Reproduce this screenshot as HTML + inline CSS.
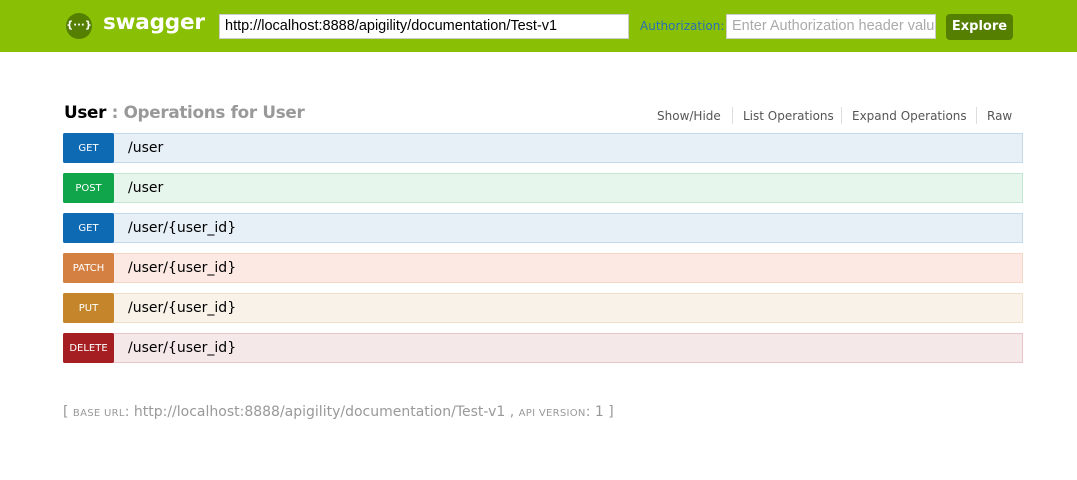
<!DOCTYPE html>
<html><head><meta charset="utf-8"><style>
*{box-sizing:border-box;margin:0;padding:0}
body{width:1077px;height:480px;background:#fff;font-family:"DejaVu Sans","Liberation Sans",sans-serif;position:relative;overflow:hidden}
#hdr{position:absolute;left:0;top:0;width:1077px;height:52px;background:#89bf04}
.logo{position:absolute;left:66px;top:13px;width:26px;height:26px;border-radius:50%;background:#547f00;color:#fff;font-size:10px;font-weight:bold;text-align:center;line-height:25px}
.brand{position:absolute;left:103px;top:10px;color:#fff;font-weight:bold;font-size:21.5px;letter-spacing:-0.2px}
.inp{position:absolute;top:14px;height:25px;background:#fff;border:1px solid #ccc;font-family:"Liberation Sans",sans-serif;font-size:14.5px;line-height:23px;padding-left:5px;white-space:nowrap;overflow:hidden}
.auth{position:absolute;left:640px;top:19px;color:#2a6eb8;font-size:12px}
.btn{position:absolute;left:946px;top:14px;width:67px;height:26px;background:#547f00;color:#fff;font-weight:bold;font-size:13px;text-align:center;line-height:26px;border-radius:4px}
.title{position:absolute;left:64px;top:102px;font-size:16.8px;font-weight:bold;color:#000;letter-spacing:-0.3px}
.title span{color:#999}
.links{position:absolute;top:109px;font-size:12px;color:#555}
.sep{position:absolute;top:107px;width:1px;height:17px;background:#ddd}
.row{position:absolute;left:63px;width:960px;height:30px;border:1px solid}
.badge{position:absolute;left:-1px;top:-1px;width:51px;height:30px;border-radius:2px;color:#fff;font-size:10px;text-align:center;line-height:31px}
.path{position:absolute;left:64px;top:1px;line-height:27px;font-size:14px;color:#000}
.foot{position:absolute;left:63px;top:404px;font-size:14px;color:#999;white-space:nowrap}
.sc{font-size:10px;letter-spacing:.3px}
</style></head><body>
<div id="hdr">
<div class="logo">{···}</div>
<div class="brand">swagger</div>
<div class="inp" style="left:219px;width:410px;color:#000">http://localhost:8888/apigility/documentation/Test-v1</div>
<div class="auth">Authorization:</div>
<div class="inp" style="left:726px;width:210px;color:#aaa">Enter Authorization header value</div>
<div class="btn">Explore</div>
</div>
<div class="title">User <span>: Operations for User</span></div>
<div class="links" style="left:657px">Show/Hide</div>
<div class="sep" style="left:732px"></div>
<div class="links" style="left:743px">List Operations</div>
<div class="sep" style="left:841px"></div>
<div class="links" style="left:852px">Expand Operations</div>
<div class="sep" style="left:976px"></div>
<div class="links" style="left:987px">Raw</div>

<div class="row" style="top:133px;background:#e7eff7;border-color:#c3d9ec"><div class="badge" style="background:#0f6ab4">GET</div><div class="path">/user</div></div>
<div class="row" style="top:173px;background:#e7f6ec;border-color:#c3e8d1"><div class="badge" style="background:#10a54a">POST</div><div class="path">/user</div></div>
<div class="row" style="top:213px;background:#e7eff7;border-color:#c3d9ec"><div class="badge" style="background:#0f6ab4">GET</div><div class="path">/user/{user_id}</div></div>
<div class="row" style="top:253px;background:#fce9e3;border-color:#f5d5c3"><div class="badge" style="background:#d38042">PATCH</div><div class="path">/user/{user_id}</div></div>
<div class="row" style="top:293px;background:#f9f2e9;border-color:#f0e0ca"><div class="badge" style="background:#c5862b">PUT</div><div class="path">/user/{user_id}</div></div>
<div class="row" style="top:333px;background:#f5e8e8;border-color:#e8c6c7"><div class="badge" style="background:#a41e22">DELETE</div><div class="path">/user/{user_id}</div></div>

<div class="foot">[ <span class="sc">BASE URL</span>: http://localhost:8888/apigility/documentation/Test-v1 , <span class="sc">API VERSION</span>: 1 ]</div>
</body></html>
